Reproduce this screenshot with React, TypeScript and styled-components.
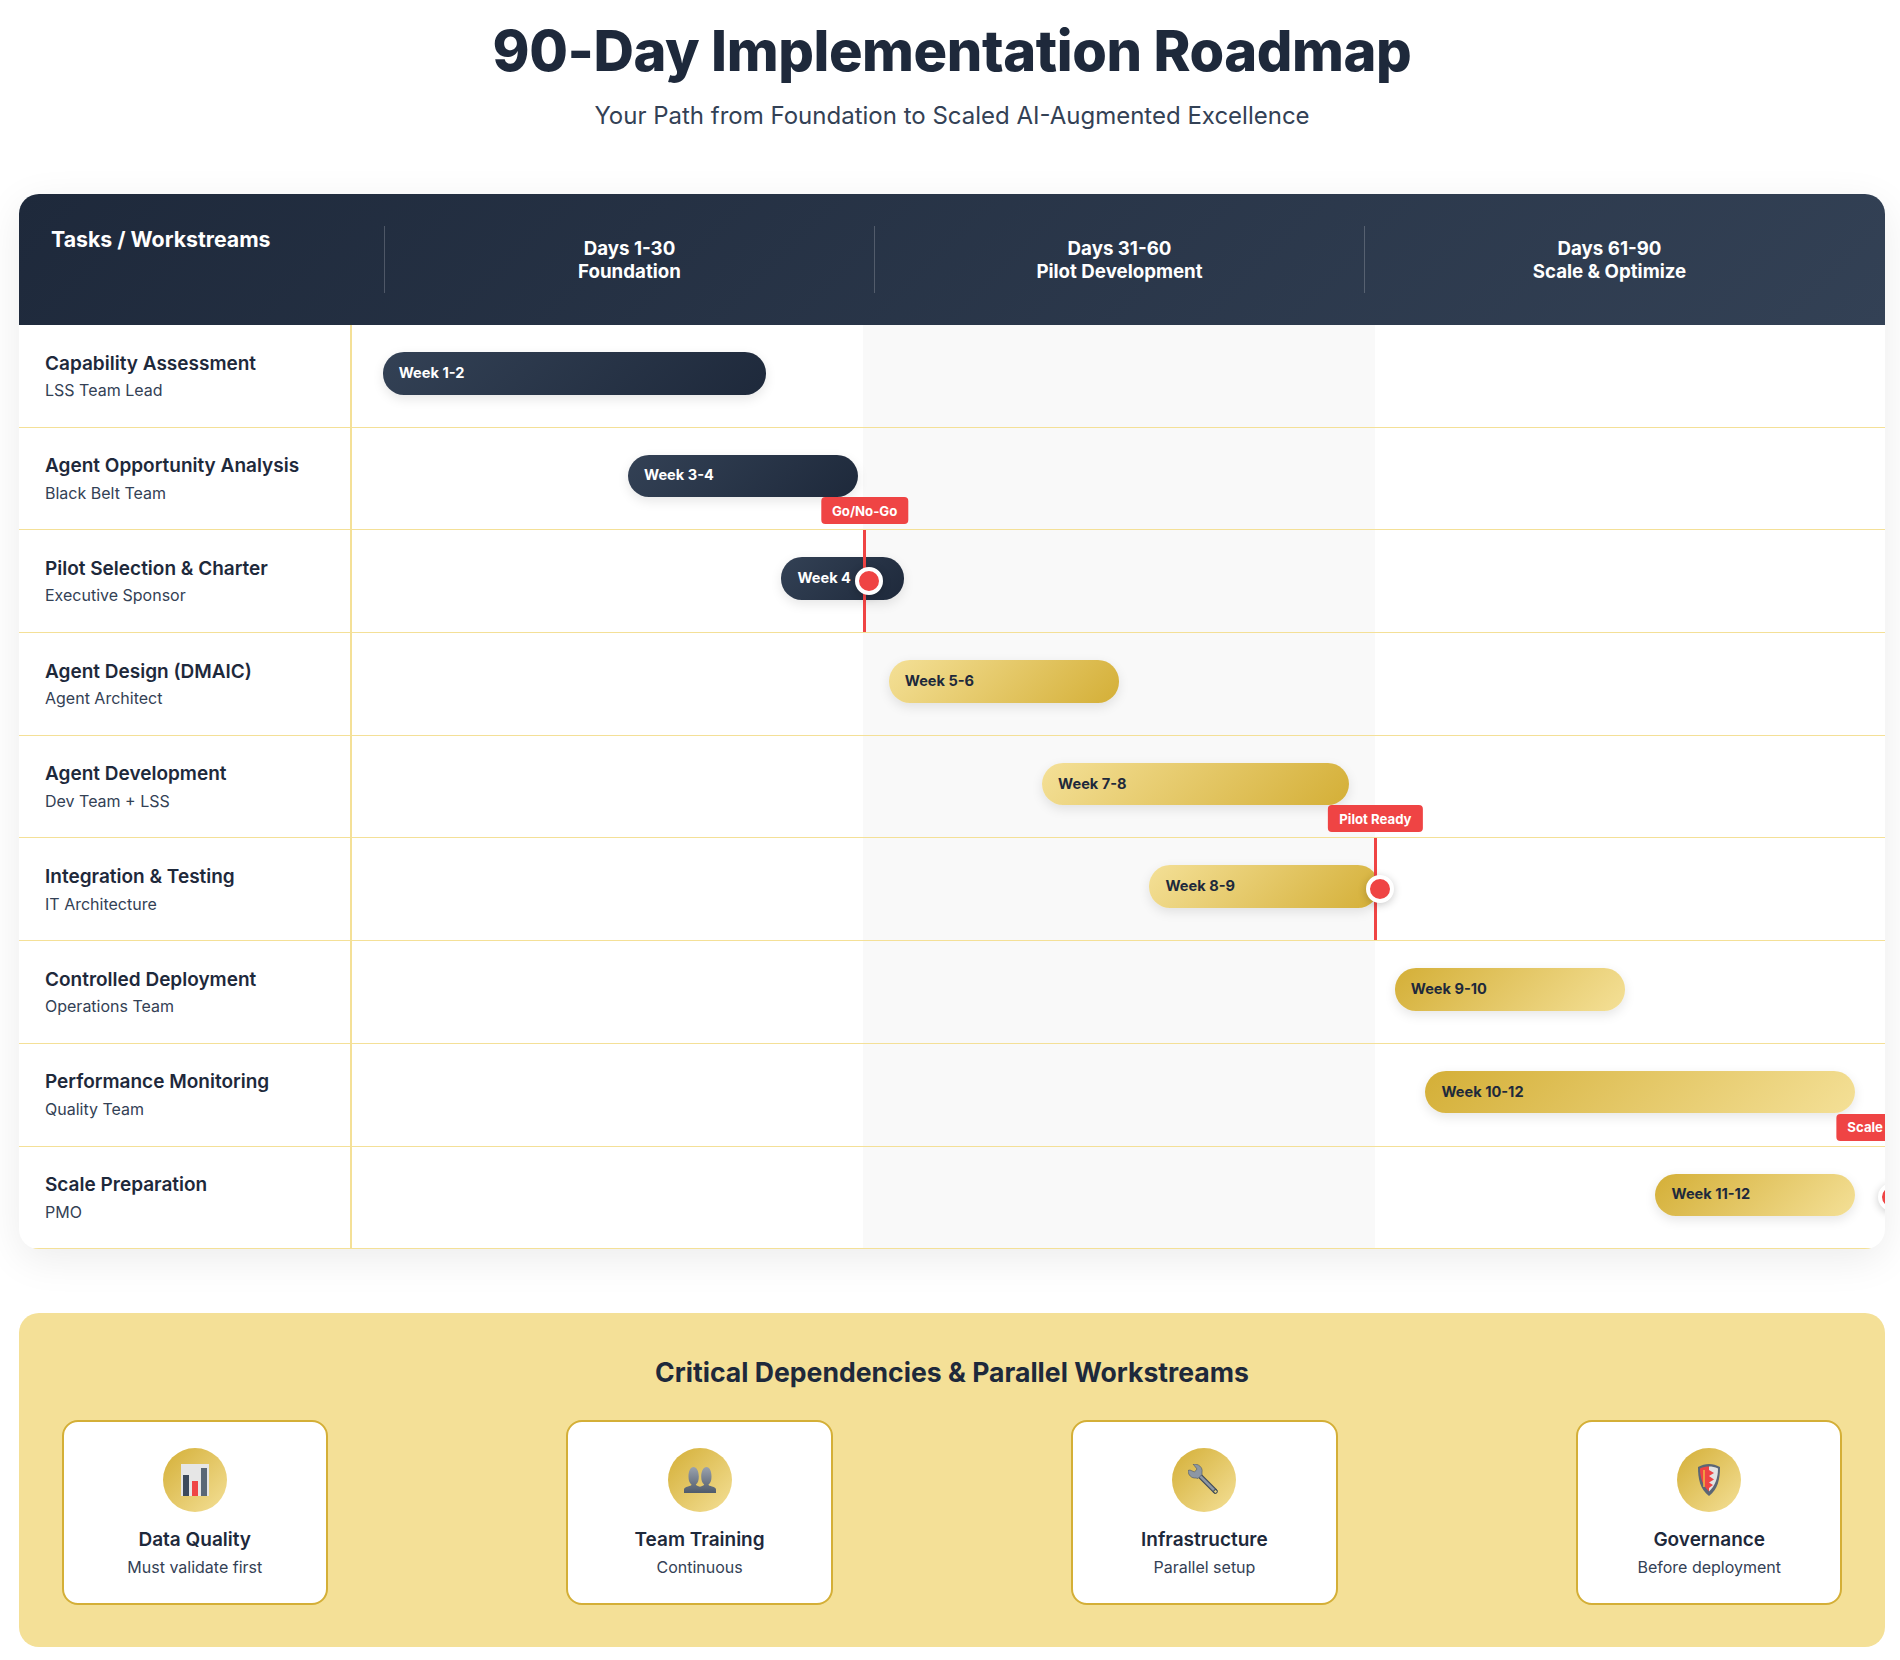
import React from "react";
import styled, { createGlobalStyle } from "styled-components";

const Global = createGlobalStyle`
  html, body { margin: 0; padding: 0; background: #fff; }
  body { font-family: Inter, "Liberation Sans", sans-serif; color: #1e293b; }
`;

const Page = styled.div`
  width: 1900px;
  box-sizing: border-box;
  padding: 0 15px 13px 19px;
`;
const Hero = styled.header`
  text-align: center;
  height: 194px;
  padding-top: 17px;
  box-sizing: border-box;
`;
const Title = styled.h1`
  margin: 0;
  font-size: 56px;
  line-height: 68px;
  font-weight: 800;
  letter-spacing: -0.42px;
  color: #1e293b;
`;
const Subtitle = styled.p`
  margin: 0;
  padding-top: 16px;
  font-size: 24px;
  line-height: 30px;
  color: #334155;
`;
const Chart = styled.section`
  border-radius: 20px;
  overflow: hidden;
  background: #fff;
  box-shadow: 0 10px 40px rgba(0, 0, 0, 0.08);
`;
const ChartHead = styled.div`
  display: grid;
  grid-template-columns: 333px repeat(3, 490px);
  padding: 32px 0 32px 32px;
  background: linear-gradient(135deg, #1e293b 0%, #334155 100%);
  color: #fff;
`;
const HeadTask = styled.div`
  font-size: 21.3px;
  line-height: 26px;
  font-weight: 700;
`;
const HeadPhase = styled.div`
  height: 67px;
  box-sizing: border-box;
  display: flex;
  flex-direction: column;
  justify-content: center;
  text-align: center;
  font-size: 18.7px;
  line-height: 23px;
  font-weight: 700;
  border-left: 1px solid rgba(255, 255, 255, 0.2);
`;
const Row = styled.div`
  display: grid;
  grid-template-columns: 333px 1533.5px;
  height: 102.7px;
  box-sizing: border-box;
  border-bottom: 1px solid #f4e097;
`;
const TaskCell = styled.div`
  display: flex;
  flex-direction: column;
  justify-content: center;
  padding-left: 26px;
  border-right: 2px solid #f4e097;
`;
const TaskName = styled.div`
  font-size: 19px;
  line-height: 28px;
  font-weight: 600;
  color: #1e293b;
`;
const TaskOwner = styled.div`
  font-size: 16px;
  line-height: 24px;
  margin-top: 0.5px;
  color: #334155;
`;
const Timeline = styled.div`
  position: relative;
  background: linear-gradient(90deg, transparent 33.33%, #f9f9f9 33.33%, #f9f9f9 66.66%, transparent 66.66%);
`;
const Bar = styled.div<{ $left: number; $width: number; $tone: "navy" | "rise" | "fall" }>`
  position: absolute;
  top: 27px;
  left: ${(p) => p.$left}%;
  width: ${(p) => p.$width}%;
  height: 42.6px;
  box-sizing: border-box;
  display: flex;
  align-items: center;
  padding: 0 0 1px 16px;
  border-radius: 21px;
  font-size: 14.6px;
  font-weight: 700;
  box-shadow: 0 4px 12px rgba(0, 0, 0, 0.1);
  color: ${(p) => (p.$tone === "navy" ? "#fff" : "#1e293b")};
  background: ${(p) =>
    p.$tone === "navy"
      ? "linear-gradient(135deg, #334155 0%, #1e293b 100%)"
      : p.$tone === "rise"
      ? "linear-gradient(135deg, #f4e097 0%, #d4af37 100%)"
      : "linear-gradient(135deg, #d4af37 0%, #f4e097 100%)"};
`;
const Marker = styled.div<{ $left: number }>`
  position: absolute;
  top: 0;
  bottom: 0;
  left: ${(p) => p.$left}%;
  width: 3px;
  background: #ef4444;
  z-index: 3;
`;
const MarkerLabel = styled.div`
  position: absolute;
  top: -33px;
  left: 50%;
  transform: translateX(-50%);
  height: 27px;
  padding: 0 11px;
  display: flex;
  align-items: center;
  border-radius: 4px;
  background: #ef4444;
  color: #fff;
  font-size: 13.2px;
  font-weight: 700;
  white-space: nowrap;
`;
const MarkerDot = styled.div`
  position: absolute;
  top: 50%;
  left: -8px;
  width: 28px;
  height: 28px;
  box-sizing: border-box;
  transform: translateY(-50%);
  border: 4px solid #fff;
  border-radius: 50%;
  background: #ef4444;
  box-shadow: 0 2px 8px rgba(0, 0, 0, 0.2);
`;
const Panel = styled.section`
  margin-top: 64.2px;
  padding: 36px 42.5px 42px;
  border-radius: 20px;
  background: #f4e097;
`;
const PanelTitle = styled.h2`
  margin: 0 0 25px;
  text-align: center;
  font-size: 26.6px;
  line-height: 46px;
  font-weight: 700;
  color: #1e293b;
`;
const DepRow = styled.div`
  display: flex;
  justify-content: space-between;
`;
const DepCard = styled.div`
  width: 266.5px;
  height: 185px;
  box-sizing: border-box;
  padding-top: 26px;
  display: flex;
  flex-direction: column;
  align-items: center;
  background: #fff;
  border: 2px solid #d4af37;
  border-radius: 16px;
`;
const DepIcon = styled.div`
  width: 64px;
  height: 64px;
  border-radius: 50%;
  display: flex;
  align-items: center;
  justify-content: center;
  background: linear-gradient(135deg, #d4af37 0%, #f4e097 100%);
  margin-bottom: 14px;
`;
const DepName = styled.div`
  font-size: 19px;
  line-height: 28px;
  font-weight: 600;
  color: #1e293b;
`;
const DepNote = styled.div`
  font-size: 16px;
  line-height: 24px;
  margin-top: 1px;
  color: #334155;
`;

const ChartIcon = () => (
  <svg width="28" height="32" viewBox="0 0 28 32">
    <rect width="28" height="32" fill="#e6e6e6" />
    <rect x="2" y="11" width="6" height="21" fill="#3d4a5c" />
    <rect x="11" y="17" width="6" height="15" fill="#ef4444" />
    <rect x="20" y="4" width="6" height="28" fill="#5a6776" />
  </svg>
);
const PeopleIcon = () => (
  <svg width="32" height="26" viewBox="0 0 32 26">
    <defs>
      <linearGradient id="bust" x1="0" y1="0" x2="0" y2="1">
        <stop offset="0" stopColor="#9aa2ae" />
        <stop offset="1" stopColor="#4f5b6b" />
      </linearGradient>
    </defs>
    <path
      d="M0 26v-3.500c0-1.500 1.500-2.500 4-3 2-.5 3.500-1 3.500-2-2-1.500-3-4-3-8C4.500 4 6.500 0 9.500 0s5.300 4 5.300 9.500c0 4-1 6.500-3 8 .5 1 2 1.700 4.200 2.200 2.200-.5 3.700-1.200 4.200-2.200-2-1.500-3-4-3-8C17.200 4 19.500 0 22.500 0s5 4 5 9.500c0 4-1 6.500-3 8 0 1 1.500 1.500 3.500 2 2.500.5 4 1.500 4 3V26z"
      fill="url(#bust)"
    />
  </svg>
);
const WrenchIcon = () => (
  <svg width="32" height="32" viewBox="0 0 32 32">
    <path d="M10 10 27 27" stroke="#3f4a58" strokeWidth="5" strokeLinecap="round" />
    <path d="M10 10 27 27" stroke="#8d97a3" strokeWidth="2.500" strokeLinecap="round" />
    <path
      d="M5 0 9 5 6.500 8 2 6 0 6.500C0 11 3.500 14.500 8 14l2 .5 4-4V8C15 3.500 10.500-.5 5 0z"
      fill="#8d97a3"
      stroke="#4a5563"
      strokeWidth=".6"
    />
    <circle cx="27.500" cy="27.500" r="1.800" fill="#e8d27f" stroke="#2d3e50" />
  </svg>
);
const ShieldIcon = () => (
  <svg width="22" height="32" viewBox="0 0 22 32">
    <path d="M0 3C4 1 7 0 11 0s7 1 11 3c0 12-2 22-11 29C2 25 0 15 0 3z" fill="#5b6675" />
    <path d="M2 4.500C5 3 8 2.500 11 2.500v25C5 22 2 14 2 4.500z" fill="#ef4444" />
    <path d="M11 2.500c3 0 6 .5 9 2 0 9.500-3 17.500-9 23z" fill="#e3e3e3" />
    <path d="M11 6l5 3-5 3 5 3.500-5 3 4 2.500-4 3z" fill="#ef4444" />
    <path d="M5 6h2v17H5z" fill="#f0c040" opacity=".7" />
  </svg>
);

type Task = {
  name: string;
  owner: string;
  week: string;
  left: number;
  width: number;
  tone: "navy" | "rise" | "fall";
  marker?: { left: number; label: string };
};

const tasks: Task[] = [
  { name: "Capability Assessment", owner: "LSS Team Lead", week: "Week 1-2", left: 2, width: 25, tone: "navy" },
  { name: "Agent Opportunity Analysis", owner: "Black Belt Team", week: "Week 3-4", left: 18, width: 15, tone: "navy" },
  { name: "Pilot Selection & Charter", owner: "Executive Sponsor", week: "Week 4", left: 28, width: 8, tone: "navy", marker: { left: 33.33, label: "Go/No-Go" } },
  { name: "Agent Design (DMAIC)", owner: "Agent Architect", week: "Week 5-6", left: 35, width: 15, tone: "rise" },
  { name: "Agent Development", owner: "Dev Team + LSS", week: "Week 7-8", left: 45, width: 20, tone: "rise" },
  { name: "Integration & Testing", owner: "IT Architecture", week: "Week 8-9", left: 52, width: 15, tone: "rise", marker: { left: 66.64, label: "Pilot Ready" } },
  { name: "Controlled Deployment", owner: "Operations Team", week: "Week 9-10", left: 68, width: 15, tone: "fall" },
  { name: "Performance Monitoring", owner: "Quality Team", week: "Week 10-12", left: 70, width: 28, tone: "fall" },
  { name: "Scale Preparation", owner: "PMO", week: "Week 11-12", left: 85, width: 13, tone: "fall", marker: { left: 100, label: "Scale Ready" } },
];

const deps = [
  { name: "Data Quality", note: "Must validate first", icon: <ChartIcon /> },
  { name: "Team Training", note: "Continuous", icon: <PeopleIcon /> },
  { name: "Infrastructure", note: "Parallel setup", icon: <WrenchIcon /> },
  { name: "Governance", note: "Before deployment", icon: <ShieldIcon /> },
];

export default function App() {
  return (
    <Page>
      <Global />
      <Hero>
        <Title>90-Day Implementation Roadmap</Title>
        <Subtitle>Your Path from Foundation to Scaled AI-Augmented Excellence</Subtitle>
      </Hero>
      <Chart>
        <ChartHead>
          <HeadTask>Tasks / Workstreams</HeadTask>
          <HeadPhase>Days 1-30<br />Foundation</HeadPhase>
          <HeadPhase>Days 31-60<br />Pilot Development</HeadPhase>
          <HeadPhase>Days 61-90<br />Scale &amp; Optimize</HeadPhase>
        </ChartHead>
        {tasks.map((t) => (
          <Row key={t.name}>
            <TaskCell>
              <TaskName>{t.name}</TaskName>
              <TaskOwner>{t.owner}</TaskOwner>
            </TaskCell>
            <Timeline>
              <Bar $left={t.left} $width={t.width} $tone={t.tone}>{t.week}</Bar>
              {t.marker && (
                <Marker $left={t.marker.left}>
                  <MarkerLabel>{t.marker.label}</MarkerLabel>
                  <MarkerDot />
                </Marker>
              )}
            </Timeline>
          </Row>
        ))}
      </Chart>
      <Panel>
        <PanelTitle>Critical Dependencies &amp; Parallel Workstreams</PanelTitle>
        <DepRow>
          {deps.map((d) => (
            <DepCard key={d.name}>
              <DepIcon>{d.icon}</DepIcon>
              <DepName>{d.name}</DepName>
              <DepNote>{d.note}</DepNote>
            </DepCard>
          ))}
        </DepRow>
      </Panel>
    </Page>
  );
}
